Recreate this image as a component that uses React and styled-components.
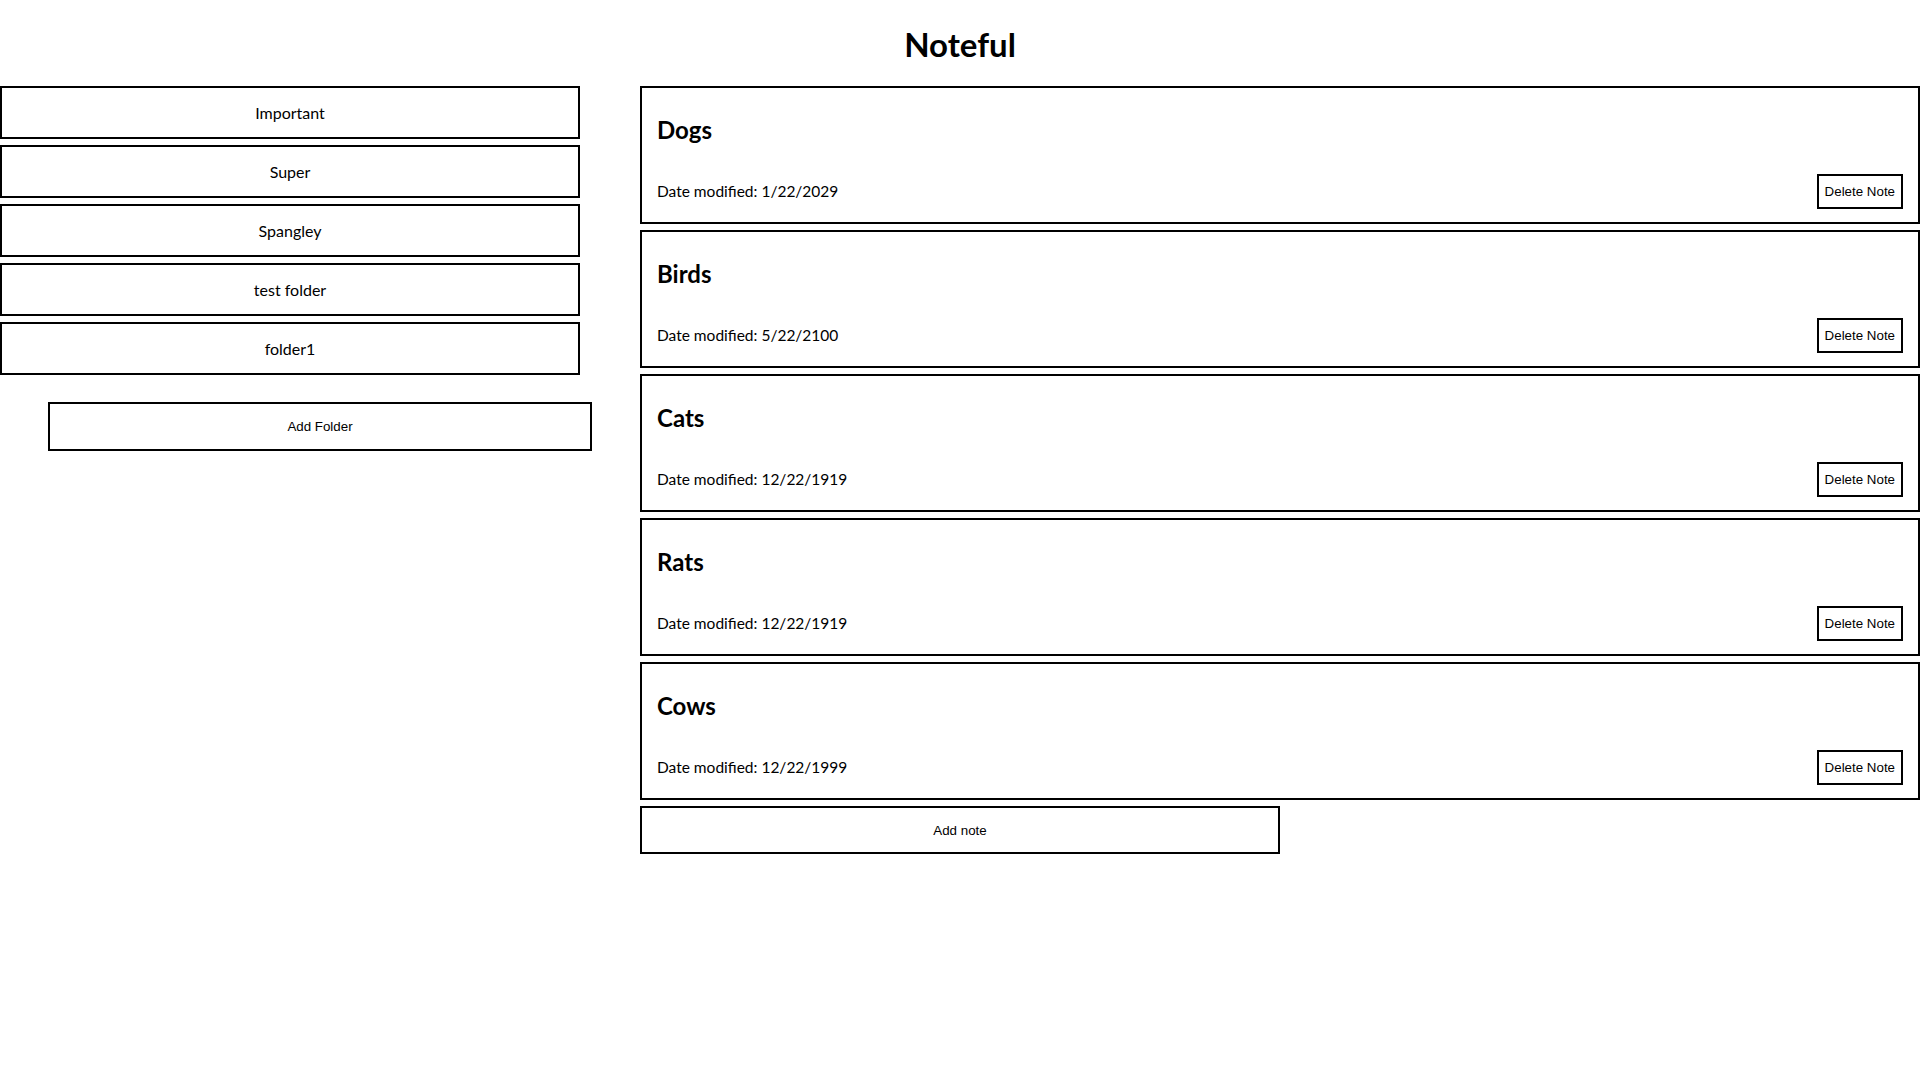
import React from "react";
import styled, { createGlobalStyle } from "styled-components";

const GlobalStyle = createGlobalStyle`
  html, body {
    margin: 0;
    padding: 0;
    background: #ffffff;
  }
  body {
    font-family: Lato, "Noto Sans", "DejaVu Sans", sans-serif;
    color: #000000;
  }
  * {
    box-sizing: border-box;
  }
`;

const Page = styled.div`
  width: 1920px;
`;

const Title = styled.h1`
  margin: 0;
  padding: 28px 0 26px;
  font-size: 33px;
  line-height: 32px;
  font-weight: 700;
  text-align: center;
`;

const Layout = styled.div`
  display: flex;
  align-items: flex-start;
`;

const Sidebar = styled.nav`
  flex: 0 0 640px;
  display: flex;
  flex-direction: column;
`;

const FolderList = styled.ul`
  list-style: none;
  margin: 0;
  padding: 0;
`;

const FolderItem = styled.li`
  width: 580px;
  height: 53px;
  margin-bottom: 6px;
  border: 2px solid #000;
  display: flex;
  align-items: center;
  justify-content: center;
  font-size: 16px;
`;

const OutlineButton = styled.button`
  font-family: "Liberation Sans", Arial, sans-serif;
  font-size: 13.333px;
  color: #000;
  background: #fff;
  border: 2px solid #000;
  cursor: pointer;
  padding: 0 6px;
`;

const AddFolderButton = styled(OutlineButton)`
  align-self: center;
  width: 544px;
  height: 49px;
  margin-top: 21px;
`;

const Main = styled.main`
  flex: 0 0 1280px;
  display: flex;
  flex-direction: column;
`;

const NoteCard = styled.article`
  height: 138px;
  margin-bottom: 6px;
  border: 2px solid #000;
  padding: 0 15px 0 15px;
  display: flex;
  flex-direction: column;
`;

const NoteTitle = styled.h2`
  margin: 30px 0 0;
  font-size: 24px;
  line-height: 24px;
  font-weight: 700;
`;

const NoteFooter = styled.div`
  margin-top: 32px;
  height: 35px;
  display: flex;
  align-items: center;
  justify-content: space-between;
`;

const NoteDate = styled.p`
  margin: 0;
  font-size: 15.5px;
  line-height: 19px;
`;

const DeleteButton = styled(OutlineButton)`
  height: 35px;
`;

const AddNoteButton = styled(OutlineButton)`
  width: 640px;
  height: 48px;
`;

const folders = ["Important", "Super", "Spangley", "test folder", "folder1"];

const notes = [
  { name: "Dogs", modified: "1/22/2029" },
  { name: "Birds", modified: "5/22/2100" },
  { name: "Cats", modified: "12/22/1919" },
  { name: "Rats", modified: "12/22/1919" },
  { name: "Cows", modified: "12/22/1999" },
];

export default function App() {
  return (
    <Page>
      <GlobalStyle />
      <Title>Noteful</Title>
      <Layout>
        <Sidebar>
          <FolderList>
            {folders.map((f) => (
              <FolderItem key={f}>{f}</FolderItem>
            ))}
          </FolderList>
          <AddFolderButton>Add Folder</AddFolderButton>
        </Sidebar>
        <Main>
          {notes.map((n) => (
            <NoteCard key={n.name}>
              <NoteTitle>{n.name}</NoteTitle>
              <NoteFooter>
                <NoteDate>Date modified: {n.modified}</NoteDate>
                <DeleteButton>Delete Note</DeleteButton>
              </NoteFooter>
            </NoteCard>
          ))}
          <AddNoteButton>Add note</AddNoteButton>
        </Main>
      </Layout>
    </Page>
  );
}
